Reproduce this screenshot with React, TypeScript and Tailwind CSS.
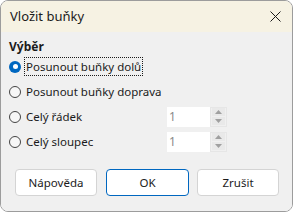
import React from "react";

const font = { fontFamily: '"Noto Sans", "Open Sans", sans-serif' };

function Radio({ checked }: { checked?: boolean }) {
  if (checked) {
    return (
      <span className="w-[12px] h-[12px] rounded-full bg-[#0067c0] flex items-center justify-center shrink-0">
        <span className="w-[5px] h-[5px] rounded-full bg-white" />
      </span>
    );
  }
  return <span className="w-[12px] h-[12px] rounded-full border border-[#444444] bg-[#f7f7f7] shrink-0" />;
}

function Spin() {
  return (
    <div className="flex items-center h-[20px]">
      <div className="w-[43px] h-[20px] bg-white flex items-center pl-[2px] text-[12px] text-[#8a8a8a]">1</div>
      <div className="w-[17px] h-[20px] border border-[#e6e6e6] flex flex-col items-center justify-center gap-[1px] px-[1px]">
        <div className="w-full h-[8px] bg-[#e9e9e9] flex items-center justify-center">
          <svg width="7" height="4" viewBox="0 0 7 4"><path d="M0 4 L3.5 0 L7 4 Z" fill="#a0a0a0" /></svg>
        </div>
        <div className="w-full h-[8px] bg-[#e9e9e9] flex items-center justify-center">
          <svg width="7" height="4" viewBox="0 0 7 4"><path d="M0 0 L3.5 4 L7 0 Z" fill="#a0a0a0" /></svg>
        </div>
      </div>
    </div>
  );
}

export default function App() {
  return (
    <div className="w-[293px] h-[212px] bg-white" style={font}>
      <div className="w-full h-full rounded-[8px] border border-[#9c9c9c] overflow-hidden flex flex-col text-[#1b1b1b]">
        <div className="h-[31px] shrink-0 bg-[#f6f2e3] flex items-center justify-between pl-[9px] pr-[11px]">
          <span className="text-[13px] leading-none">Vložit buňky</span>
          <svg width="11" height="11" viewBox="0 0 11 11">
            <path d="M0.5 0.5 L10.5 10.5 M10.5 0.5 L0.5 10.5" stroke="#1b1b1b" strokeWidth="1" />
          </svg>
        </div>
        <div className="flex-1 bg-[#f0f0f0] flex flex-col px-[8px] pt-[7px]">
          <div className="text-[12px] leading-[15px] font-bold">Výběr</div>
          <div className="h-[25px] flex items-center gap-[4px]">
            <Radio checked />
            <span className="text-[11.5px] leading-[17px] px-[1px] outline outline-1 outline-dotted outline-[#1b1b1b]">
              Posunout buňky dolů
            </span>
          </div>
          <div className="h-[25px] flex items-center gap-[5px]">
            <Radio />
            <span className="text-[11.5px]">Posunout buňky doprava</span>
          </div>
          <div className="h-[25px] flex items-center gap-[5px]">
            <Radio />
            <span className="text-[11.5px] w-[136px]">Celý řádek</span>
            <Spin />
          </div>
          <div className="h-[25px] flex items-center gap-[5px]">
            <Radio />
            <span className="text-[11.5px] w-[136px]">Celý sloupec</span>
            <Spin />
          </div>
          <div className="flex mt-[15px] ml-[6px] gap-[9px]">
            <button className="w-[82px] h-[27px] bg-white border border-[#d4d4d4] rounded-[4px] text-[11.5px]">Nápověda</button>
            <button className="w-[83px] h-[27px] bg-white border border-[#0067c0] rounded-[4px] text-[11.5px]">OK</button>
            <button className="w-[82px] h-[27px] bg-white border border-[#d4d4d4] rounded-[4px] text-[11.5px] -ml-[1px]">Zrušit</button>
          </div>
        </div>
      </div>
    </div>
  );
}
